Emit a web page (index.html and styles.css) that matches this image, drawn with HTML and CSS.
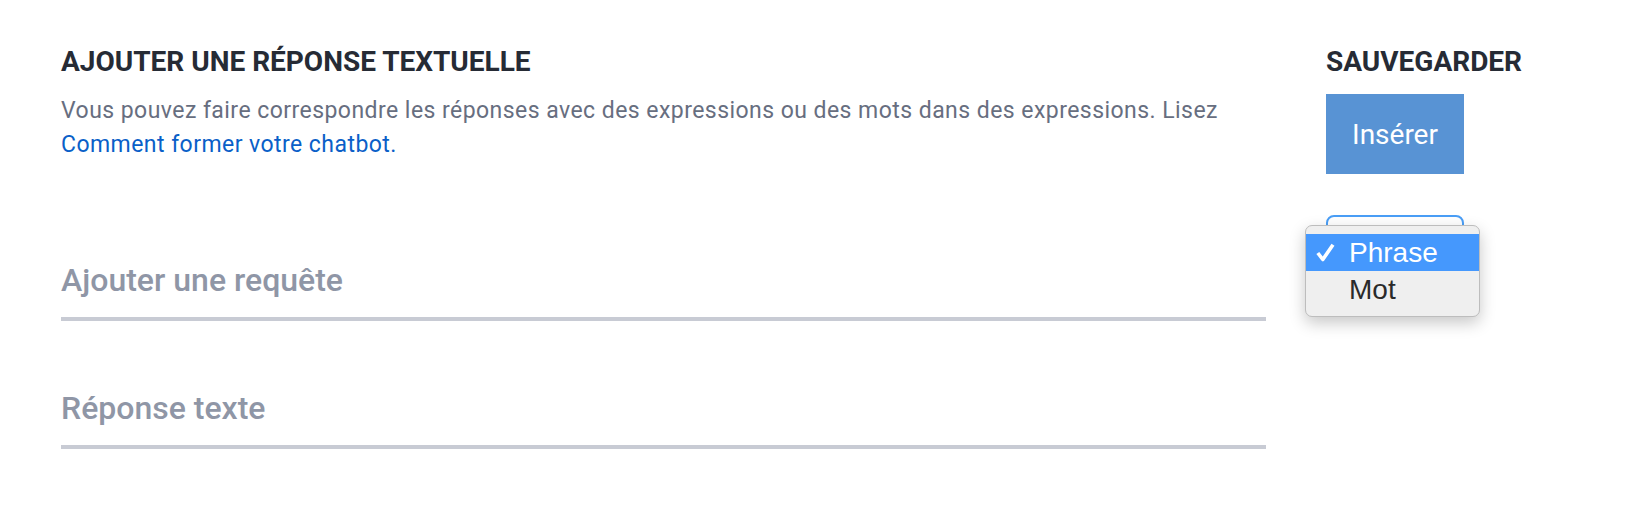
FILE: index.html
```html
<!DOCTYPE html>
<html lang="fr">
<head>
    <meta charset="UTF-8">
    <title>Ajouter une réponse textuelle</title>
    <link rel="stylesheet" href="styles.css">
</head>
<body>
    <div class="page">
        <!-- Main form -->
        <div class="main">
            <h2 class="title">AJOUTER UNE RÉPONSE TEXTUELLE</h2>
            <p class="intro">Vous pouvez faire correspondre les réponses avec des expressions ou des mots dans des expressions. Lisez <a href="#">Comment former votre chatbot.</a></p>

            <div class="field">
                <input type="text" placeholder="Ajouter une requête">
            </div>
            <div class="field">
                <input type="text" placeholder="Réponse texte">
            </div>
        </div>

        <!-- Side actions -->
        <div class="side">
            <h2 class="title">SAUVEGARDER</h2>
            <button class="insert">Insérer</button>

            <div class="select-wrap">
                <div class="select"></div>
                <!-- Open dropdown -->
                <ul class="menu">
                    <li class="active">
                        <span class="check">
                            <svg width="19" height="19" viewBox="0 0 19 19"><polyline points="1.8,10 6.8,16.5 17,1.8" fill="none" stroke="#ffffff" stroke-width="3.6" stroke-linejoin="round"/></svg>
                        </span>Phrase
                    </li>
                    <li><span class="check"></span>Mot</li>
                </ul>
            </div>
        </div>
    </div>
</body>
</html>
```

FILE: styles.css
```css
/* Global Styles */
body {
    margin: 0;
    font-family: Roboto, "Liberation Sans", sans-serif;
    background-color: #ffffff;
}

.page {
    display: flex;
    gap: 60px;
    padding: 47px 0 0 61px;
}

/* Main column */
.main {
    width: 1205px;
}

.title {
    margin: 0;
    font-size: 28px;
    font-weight: 700;
    line-height: 30px;
    color: #262b35;
}

.intro {
    margin: 17px 0 0;
    font-size: 23px;
    letter-spacing: 0.45px;
    line-height: 34px;
    color: #676e80;
}

.intro a {
    color: #0a5fc8;
    text-decoration: none;
}

/* Fields */
.field {
    margin-top: 98px;
}

.field + .field {
    margin-top: 67px;
}

.field input {
    display: block;
    width: 100%;
    height: 61px;
    box-sizing: border-box;
    border: none;
    border-bottom: 4px solid #c8cbd4;
    padding: 0 0 17px;
    font-family: Roboto, sans-serif;
    font-size: 32px;
    font-weight: 500;
    line-height: 40px;
    color: #272c36;
    outline: none;
}

.field input::placeholder {
    color: #8f96a6;
}

/* Side column */
.side {
    width: 220px;
}

.insert {
    display: block;
    margin-top: 17px;
    width: 138px;
    height: 80px;
    border: none;
    background-color: #5893d4;
    color: #ffffff;
    font-family: Roboto, sans-serif;
    font-size: 28px;
    cursor: pointer;
}

.select-wrap {
    position: relative;
    margin-top: 41px;
}

.select {
    width: 138px;
    height: 48px;
    box-sizing: border-box;
    border: 2px solid #4a9ef6;
    border-radius: 8px;
}

/* Dropdown menu */
.menu {
    position: absolute;
    top: 10px;
    left: -21px;
    width: 175px;
    margin: 0;
    padding: 8px 0;
    box-sizing: border-box;
    list-style: none;
    background-color: #efefef;
    border: 1px solid #bdbdbd;
    border-radius: 7px;
    box-shadow: 0 6px 16px rgba(0, 0, 0, 0.22);
    font-family: "Liberation Sans", Arial, sans-serif;
    font-size: 28px;
    color: #2a2a2a;
}

.menu li {
    display: flex;
    align-items: center;
    height: 37px;
    padding-left: 10px;
}

.menu li.active {
    background-color: #4598fd;
    color: #ffffff;
}

.check {
    display: flex;
    width: 33px;
}
```
